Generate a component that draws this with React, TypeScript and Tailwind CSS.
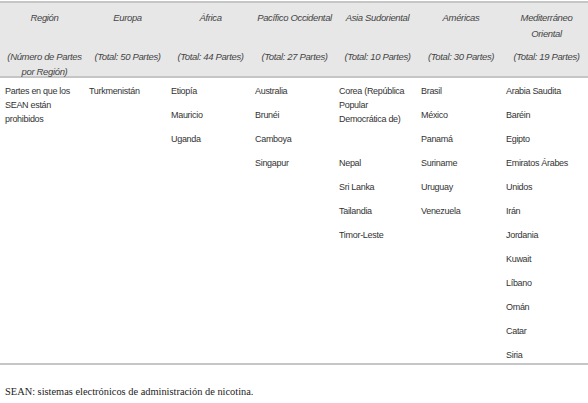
const columns = [
  { title: ['Región'], total: ['(Número de Partes', 'por Región)'] },
  { title: ['Europa'], total: ['(Total: 50 Partes)'] },
  { title: ['África'], total: ['(Total: 44 Partes)'] },
  { title: ['Pacífico Occidental'], total: ['(Total: 27 Partes)'] },
  { title: ['Asia Sudoriental'], total: ['(Total: 10 Partes)'] },
  { title: ['Américas'], total: ['(Total: 30 Partes)'] },
  { title: ['Mediterráneo', 'Oriental'], total: ['(Total: 19 Partes)'] },
];

const body: string[][][] = [
  [['Partes en que los', 'SEAN están', 'prohibidos']],
  [['Turkmenistán']],
  [['Etiopía'], ['Mauricio'], ['Uganda']],
  [['Australia'], ['Brunéi'], ['Camboya'], ['Singapur']],
  [['Corea (República', 'Popular', 'Democrática de)'], ['Nepal'], ['Sri Lanka'], ['Tailandia'], ['Timor-Leste']],
  [['Brasil'], ['México'], ['Panamá'], ['Suriname'], ['Uruguay'], ['Venezuela']],
  [
    ['Arabia Saudita'], ['Baréin'], ['Egipto'], ['Emiratos Árabes'], ['Unidos'], ['Irán'],
    ['Jordania'], ['Kuwait'], ['Líbano'], ['Omán'], ['Catar'], ['Siria'],
  ],
];

const grid = 'grid grid-cols-[84px_82px_84px_84px_82px_85px_86px]';

const App = () => {
  return (
    <div className="w-[588px] h-[403px] bg-white pt-[1px] font-['Liberation_Sans',Arial,sans-serif]">
      {/* Header */}
      <div className={`${grid} h-[77px] bg-[#e7e7e7] border-t-2 border-b-2 border-[#c6c6c6] text-[9.5px] tracking-[-0.35px] italic text-[#454545]`}>
        {columns.map((c, i) => (
          <div key={i} className="flex flex-col items-center text-center whitespace-nowrap pl-[5px] pt-[7px]">
            <div className="h-[39px] leading-[16px]">
              {c.title.map((t) => (
                <div key={t}>{t}</div>
              ))}
            </div>
            <div className="leading-[15px]">
              {c.total.map((t) => (
                <div key={t}>{t}</div>
              ))}
            </div>
          </div>
        ))}
      </div>

      {/* Body */}
      <div className={`${grid} pt-[6px] pb-[1px] border-b-2 border-[#c6c6c6] text-[9px] tracking-[-0.3px] text-[#333]`}>
        {body.map((col, i) => (
          <div key={i} className="flex flex-col gap-[10px] pl-[5px] leading-[14px] whitespace-nowrap">
            {col.map((item, j) => (
              <div key={j} className={item.length === 3 && i === 4 ? 'h-[62px]' : ''}>
                {item.map((line) => (
                  <div key={line}>{line}</div>
                ))}
              </div>
            ))}
          </div>
        ))}
      </div>

      {/* Footer */}
      <p className="pl-[5px] pt-[21px] text-[10.4px] leading-[12px] text-[#222] font-['Liberation_Serif','Times_New_Roman',serif]">
        SEAN: sistemas electrónicos de administración de nicotina.
      </p>
    </div>
  );
};

export default App;
